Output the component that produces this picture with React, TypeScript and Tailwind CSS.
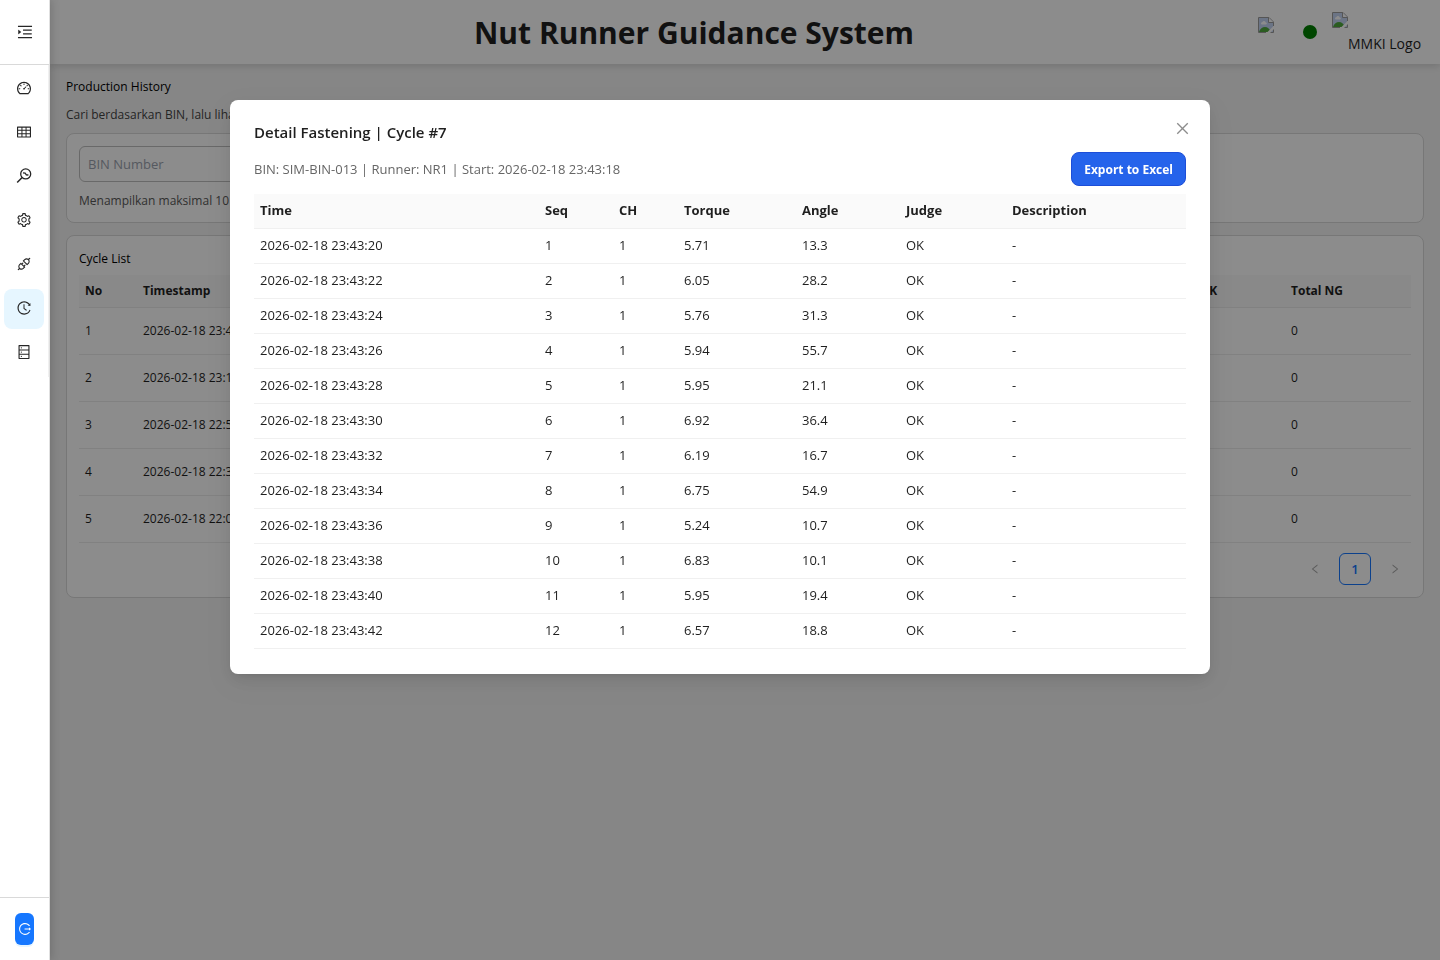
import React from 'react';
import {
  AiOutlineApi,
  AiOutlineClose,
  AiOutlineDashboard,
  AiOutlineDatabase,
  AiOutlineHistory,
  AiOutlineLeft,
  AiOutlineLogout,
  AiOutlineMenuUnfold,
  AiOutlineRight,
  AiOutlineSetting,
  AiOutlineTable,
} from 'react-icons/ai';

function RunnerIcon({ size = 16 }: { size?: number }) {
  return (
    <svg width={size} height={size} viewBox="0 0 16 16" fill="none" stroke="currentColor" strokeWidth="1.3" aria-hidden="true">
      <circle cx="9.7" cy="5.9" r="5" />
      <path d="M6.1 9.5 1.2 14.6" strokeWidth="1.5" />
      <path d="M7 4.8l2.1.2 1.2 1.8 2.1.2" />
    </svg>
  );
}

const menuItems = [
  { label: 'Dashboard', icon: AiOutlineDashboard },
  { label: 'Master Data', icon: AiOutlineTable },
  { label: 'Runner', icon: RunnerIcon },
  { label: 'Settings', icon: AiOutlineSetting },
  { label: 'Connection', icon: AiOutlineApi },
  { label: 'Production History', icon: AiOutlineHistory, active: true },
  { label: 'Database', icon: AiOutlineDatabase },
];

const cycles = [
  { no: 1, timestamp: '2026-02-18 23:43:18', bin: 'SIM-BIN-013', runner: 'NR1', ok: 12, ng: 0 },
  { no: 2, timestamp: '2026-02-18 23:12:04', bin: 'SIM-BIN-012', runner: 'NR1', ok: 12, ng: 0 },
  { no: 3, timestamp: '2026-02-18 22:51:40', bin: 'SIM-BIN-011', runner: 'NR1', ok: 12, ng: 0 },
  { no: 4, timestamp: '2026-02-18 22:30:22', bin: 'SIM-BIN-010', runner: 'NR1', ok: 12, ng: 0 },
  { no: 5, timestamp: '2026-02-18 22:08:57', bin: 'SIM-BIN-009', runner: 'NR1', ok: 12, ng: 0 },
];

const fastenings = [
  { time: '2026-02-18 23:43:20', seq: 1, ch: 1, torque: '5.71', angle: '13.3', judge: 'OK' },
  { time: '2026-02-18 23:43:22', seq: 2, ch: 1, torque: '6.05', angle: '28.2', judge: 'OK' },
  { time: '2026-02-18 23:43:24', seq: 3, ch: 1, torque: '5.76', angle: '31.3', judge: 'OK' },
  { time: '2026-02-18 23:43:26', seq: 4, ch: 1, torque: '5.94', angle: '55.7', judge: 'OK' },
  { time: '2026-02-18 23:43:28', seq: 5, ch: 1, torque: '5.95', angle: '21.1', judge: 'OK' },
  { time: '2026-02-18 23:43:30', seq: 6, ch: 1, torque: '6.92', angle: '36.4', judge: 'OK' },
  { time: '2026-02-18 23:43:32', seq: 7, ch: 1, torque: '6.19', angle: '16.7', judge: 'OK' },
  { time: '2026-02-18 23:43:34', seq: 8, ch: 1, torque: '6.75', angle: '54.9', judge: 'OK' },
  { time: '2026-02-18 23:43:36', seq: 9, ch: 1, torque: '5.24', angle: '10.7', judge: 'OK' },
  { time: '2026-02-18 23:43:38', seq: 10, ch: 1, torque: '6.83', angle: '10.1', judge: 'OK' },
  { time: '2026-02-18 23:43:40', seq: 11, ch: 1, torque: '5.95', angle: '19.4', judge: 'OK' },
  { time: '2026-02-18 23:43:42', seq: 12, ch: 1, torque: '6.57', angle: '18.8', judge: 'OK' },
];

function MissingImage() {
  return (
    <svg width="16" height="16" viewBox="0 0 16 16" className="shrink-0" aria-hidden="true">
      <path d="M1 1h10l4 4v10H1z" fill="#c3d3f3" />
      <path d="M3 6.5a1.6 1.6 0 0 1 1.4-1.6 1.8 1.8 0 0 1 3.3.6 1 1 0 0 1 .3 2H3.6A1 1 0 0 1 3 6.5z" fill="#fff" />
      <path d="M1 15c1-3.5 3.5-5 6-5s4.5 1.500 6 5z" fill="#4fa83d" />
      <path d="M16 8.500 8.500 16H12l4-4z" fill="#fff" />
      <path d="M.5 15.500V.5h10.500l4.500 4.500v4M.5 15.500h7.500M12.500 15.500h3V12.500" fill="none" stroke="#9b9b9b" />
      <path d="M10.500.5v5h5" fill="#fff" stroke="#9b9b9b" />
    </svg>
  );
}

function Sidebar() {
  return (
    <aside className="relative z-50 flex w-[50px] shrink-0 flex-col border-r border-[#e0e0e0] bg-white text-[#262626] shadow-[2px_0_8px_rgba(0,0,0,0.15)]">
      <div className="flex h-[65px] items-center justify-center border-b border-[#d9d9d9]">
        <button type="button" aria-label="Expand menu">
          <AiOutlineMenuUnfold size={18} />
        </button>
      </div>
      <nav className="flex flex-col gap-1 border-r border-[#f0f0f0] p-1">
        {menuItems.map((item) => (
          <a
            key={item.label}
            href="#"
            aria-label={item.label}
            className={`flex h-10 w-10 items-center justify-center rounded-lg pb-0.5 ${item.active ? 'bg-[#e6f6ff]' : ''}`}
          >
            <item.icon size={16} />
          </a>
        ))}
      </nav>
      <div className="mt-auto flex justify-center border-t border-[#d9d9d9] py-[15px]">
        <button
          type="button"
          aria-label="Logout"
          className="flex h-8 w-[19px] items-center justify-center rounded-md bg-[#1677ff] text-white shadow-[0_2px_0_rgba(5,145,255,0.1)]"
        >
          <AiOutlineLogout size={14} />
        </button>
      </div>
    </aside>
  );
}

function Header() {
  return (
    <header className="relative flex h-16 items-center bg-white px-5 shadow-[0_2px_8px_rgba(0,0,0,0.15)]">
      <h1 className="flex-1 pt-0.5 pl-[60px] text-center text-3xl font-bold text-[#1f1f1f]">Nut Runner Guidance System</h1>
      <div className="flex items-center gap-[15px]">
        <div className="h-[30px] w-[30px]">
          <MissingImage />
        </div>
        <span className="h-3.5 w-3.5 rounded-full bg-[#008000]" />
        <div className="flex h-10 w-[88px]">
          <MissingImage />
          <span className="self-end whitespace-nowrap text-sm leading-4 text-[#1f1f1f]">MMKI Logo</span>
        </div>
      </div>
    </header>
  );
}

function HistoryPage() {
  return (
    <main className="px-4 pt-[13px] pb-3 text-xs leading-5 text-[#1f1f1f]">
      <h2 className="text-black">Production History</h2>
      <p className="my-2 text-[#444]">Cari berdasarkan BIN, lalu lihat detail fastening per cycle.</p>

      <section className="rounded-lg border border-[#d9d9d9] bg-white px-3 pt-3 pb-[11px]">
        <input
          aria-label="BIN Number"
          placeholder="BIN Number"
          className="h-9 w-80 rounded-md border border-[#bfbfbf] px-2 text-[13px] placeholder:text-[#9ca3af]"
        />
        <p className="mt-[9px] text-[#595959]">Menampilkan maksimal 10 data</p>
      </section>

      <section className="mt-3 rounded-lg border border-[#d9d9d9] bg-white px-3 pt-[13px] pb-3">
        <h3 className="mb-1.5 text-black">Cycle List</h3>
        <table className="w-full table-fixed text-left">
          <thead>
            <tr className="h-8 border-b border-[#ececec] bg-[#fafafa]">
              <th className="w-[58px] px-1.5 font-bold">No</th>
              <th className="w-[265px] px-1.5 font-bold">Timestamp</th>
              <th className="w-[322px] px-1.5 font-bold">BIN</th>
              <th className="px-1.5 font-bold">Runner</th>
              <th className="w-[125px] px-1.5 font-bold">Total OK</th>
              <th className="w-[126px] px-1.5 font-bold">Total NG</th>
            </tr>
          </thead>
          <tbody>
            {cycles.map((c) => (
              <tr key={c.no} className="h-[47px] border-b border-[#ececec]">
                <td className="px-1.5">{c.no}</td>
                <td className="px-1.5">{c.timestamp}</td>
                <td className="px-1.5">{c.bin}</td>
                <td className="px-1.5">{c.runner}</td>
                <td className="px-1.5">{c.ok}</td>
                <td className="px-1.5">{c.ng}</td>
              </tr>
            ))}
          </tbody>
        </table>
        <div className="mt-2.5 flex justify-end gap-2">
          <button type="button" aria-label="Previous page" className="flex h-8 w-8 items-center justify-center text-[#a6a6a6]">
            <AiOutlineLeft size={12} />
          </button>
          <button type="button" className="h-8 w-8 rounded-md border border-[#1677ff] text-[13px] font-semibold text-[#1677ff]">
            1
          </button>
          <button type="button" aria-label="Next page" className="flex h-8 w-8 items-center justify-center text-[#a6a6a6]">
            <AiOutlineRight size={12} />
          </button>
        </div>
      </section>
    </main>
  );
}

function DetailModal() {
  return (
    <div className="fixed inset-0 z-40 flex items-start justify-center bg-black/45 pt-[100px]">
      <div
        role="dialog"
        aria-labelledby="detail-title"
        className="relative w-full max-w-[980px] rounded-lg bg-white px-6 pt-5 pb-[25px] text-[13px] text-[#1f1f1f] shadow-[0_6px_16px_0_rgba(0,0,0,0.08),0_3px_6px_-4px_rgba(0,0,0,0.12),0_9px_28px_8px_rgba(0,0,0,0.05)]"
      >
        <button
          type="button"
          aria-label="Close"
          className="absolute top-3 right-3 flex h-8 w-8 items-center justify-center text-[#8c8c8c]"
        >
          <AiOutlineClose size={17} />
        </button>
        <h2 id="detail-title" className="mb-2 text-[15px] leading-6 font-semibold">
          Detail Fastening | Cycle #7
        </h2>
        <div className="mb-2 flex items-center justify-between">
          <p className="pt-0.5 text-[#666]">BIN: SIM-BIN-013 | Runner: NR1 | Start: 2026-02-18 23:43:18</p>
          <button
            type="button"
            className="h-[34px] rounded-lg border border-[#1d4ed8] bg-[#2563eb] px-3 pt-0.5 text-xs font-bold text-white"
          >
            Export to Excel
          </button>
        </div>
        <table className="w-full table-fixed text-left">
          <thead>
            <tr className="h-[34px] border-b border-[#f0f0f0] bg-[#fafafa]">
              <th className="w-[285px] px-1.5 font-bold">Time</th>
              <th className="w-[74px] px-1.5 font-bold">Seq</th>
              <th className="w-[65px] px-1.5 font-bold">CH</th>
              <th className="w-[118px] px-1.5 font-bold">Torque</th>
              <th className="w-[104px] px-1.5 font-bold">Angle</th>
              <th className="w-[106px] px-1.5 font-bold">Judge</th>
              <th className="px-1.5 font-bold">Description</th>
            </tr>
          </thead>
          <tbody>
            {fastenings.map((f) => (
              <tr key={f.seq} className="h-[35px] border-b border-[#f0f0f0]">
                <td className="px-1.5">{f.time}</td>
                <td className="px-1.5">{f.seq}</td>
                <td className="px-1.5">{f.ch}</td>
                <td className="px-1.5">{f.torque}</td>
                <td className="px-1.5">{f.angle}</td>
                <td className="px-1.5">{f.judge}</td>
                <td className="px-1.5">-</td>
              </tr>
            ))}
          </tbody>
        </table>
      </div>
    </div>
  );
}

export default function App() {
  return (
    <div className="flex min-h-screen bg-[#f5f5f5] font-['Open_Sans','Noto_Sans',sans-serif]">
      <Sidebar />
      <div className="min-w-0 flex-1">
        <Header />
        <HistoryPage />
      </div>
      <DetailModal />
    </div>
  );
}
